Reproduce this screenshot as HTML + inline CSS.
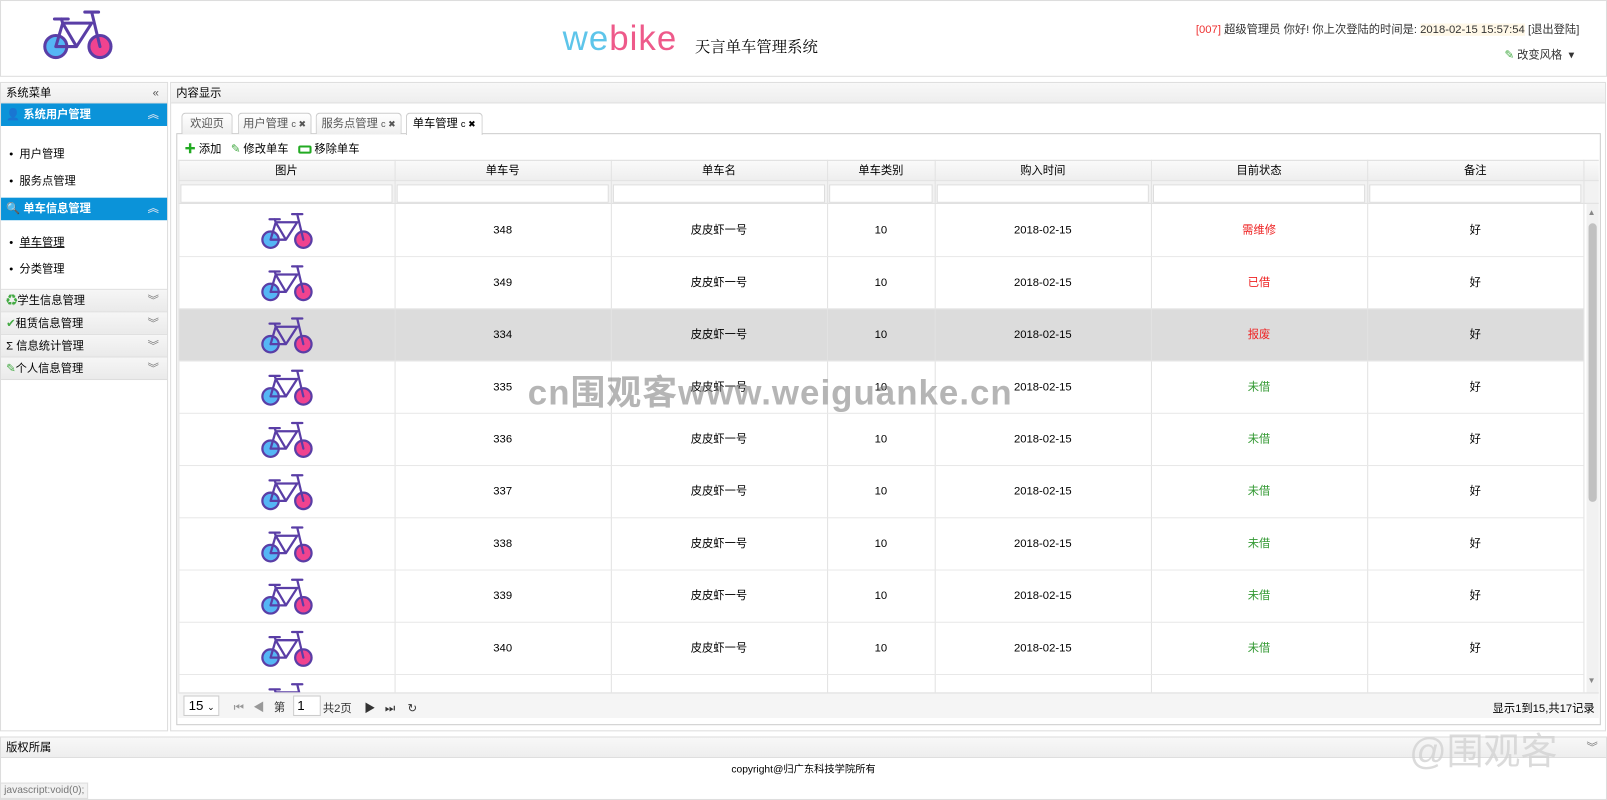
<!DOCTYPE html>
<html><head><meta charset="utf-8">
<style>
*{box-sizing:border-box;margin:0;padding:0}
html,body{width:1607px;height:800px;overflow:hidden;background:#fff}
body{font-family:"Liberation Sans","Noto Sans CJK SC",sans-serif;font-size:12px;color:#000;position:relative}
#wrap{position:absolute;left:0;top:0;width:1568px;height:781px;transform:scale(1.02487,1.0243);transform-origin:0 0}
.abs{position:absolute;white-space:nowrap}
.ph{background:linear-gradient(#f8f8f8,#eee);border-bottom:1px solid #ddd;height:20px;line-height:20px;padding-left:5px;font-size:11px;position:relative}
.cell{position:absolute;text-align:center;font-size:11px;line-height:14px}
.vl{position:absolute;width:1px;background:#e2e2e2}
.hl{position:absolute;height:1px;background:#e8e8e8}
.tab{position:absolute;top:110px;height:21px;border:1px solid #ccc;border-bottom:none;border-radius:4px 4px 0 0;background:linear-gradient(#fff,#eee);line-height:20px;text-align:center;font-size:11px;color:#555}
.acc{height:22px;line-height:22px;border-bottom:1px solid #ddd;background:linear-gradient(#f6f6f6,#eaeaea);font-size:11px;padding-left:5px;position:relative}
.acc .ch{position:absolute;right:8px;top:0;color:#777}
</style></head><body>
<svg width="0" height="0" style="position:absolute"><defs>
<g id="bike"><circle cx="9" cy="26" r="8" fill="#55b6f5" stroke="#5a3ea6" stroke-width="2.2"/><circle cx="41" cy="26" r="8" fill="#f0438f" stroke="#5a3ea6" stroke-width="2.2"/><path d="M9 26 L14 9 L35 9 M14 9 L24 26 L9 26 M24 26 L35 9 M41 26 L35 1 M30 1 L40 1 M8 6 L18 6 M13 6 L14 9" fill="none" stroke="#5a3ea6" stroke-width="2.2" stroke-linecap="round" stroke-linejoin="round"/></g>
</defs></svg>
<div id="wrap">
<div class="abs" style="left:0;top:0;width:1568px;height:75px;border:1px solid #ddd;background:#fff"></div>
<svg class="abs" style="left:41px;top:9px" width="70" height="50" viewBox="-1 -1 52 37"><use href="#bike"/></svg>
<div class="abs" style="left:549px;top:18px;font-size:34px;letter-spacing:1px;line-height:40px"><span style="color:#5ec5ea">we</span><span style="color:#ee5a8a">bike</span></div>
<div class="abs" style="left:678px;top:36px;font-size:15px;line-height:20px;font-family:'Noto Serif CJK SC',serif">天言单车管理系统</div>
<div class="abs" style="right:27px;top:20px;font-size:11px;color:#333"><span style="color:#e33">[007]</span> 超级管理员 你好! 你上次登陆的时间是: <span style="background:#fff8e8">2018-02-15 15:57:54</span> [退出登陆]</div>
<div class="abs" style="left:1468px;top:45px;font-size:11px;color:#333"><span style="color:#4a4">✎</span> 改变风格 &nbsp;▾</div>
<div class="abs" style="left:0;top:80px;width:164px;height:634px;border:1px solid #ddd">
 <div class="ph">系统菜单<span style="position:absolute;right:8px;color:#555">«</span></div>
 <div class="acc" style="background:#0b93d9;color:#fff;font-weight:bold;border:none">👤 系统用户管理<span class="ch" style="color:#cde">︽</span></div>
 <div style="height:70px;font-size:11px;padding:15px 0 0 8px;line-height:26px">• &nbsp;用户管理<br>• &nbsp;服务点管理</div>
 <div class="acc" style="background:#0b93d9;color:#fff;font-weight:bold;border:none">🔍 单车信息管理<span class="ch" style="color:#cde">︽</span></div>
 <div style="height:68px;font-size:11px;padding:9px 0 0 8px;line-height:26px;border-bottom:1px solid #ddd">• &nbsp;<u>单车管理</u><br>• &nbsp;分类管理</div>
 <div class="acc"><span style="color:#4a4">♻</span>学生信息管理<span class="ch">︾</span></div>
 <div class="acc"><span style="color:#4a4">✔</span>租赁信息管理<span class="ch">︾</span></div>
 <div class="acc">Σ 信息统计管理<span class="ch">︾</span></div>
 <div class="acc"><span style="color:#4a4">✎</span>个人信息管理<span class="ch">︾</span></div>
</div>
<div class="abs" style="left:166px;top:80px;width:1401px;height:634px;border:1px solid #ddd">
 <div class="ph">内容显示</div>
</div>
<div class="abs" style="left:172px;top:130px;width:1390px;height:578px;border:1px solid #ccc"></div>
<div class="tab" style="left:177px;width:50px">欢迎页</div>
<div class="tab" style="left:232px;width:72px">用户管理 <span style="font-size:9px">c ✖</span></div>
<div class="tab" style="left:308px;width:84px">服务点管理 <span style="font-size:9px">c ✖</span></div>
<div class="tab" style="left:396px;width:75px;background:#fff;color:#000;height:22px">单车管理 <span style="font-size:9px">c ✖</span></div>
<div class="abs" style="left:180px;top:137px;font-size:11px"><span style="color:#2a2;font-weight:bold">✚</span> 添加 &nbsp;&nbsp;<span style="color:#4a4">✎</span> 修改单车 &nbsp;&nbsp;<span style="display:inline-block;width:13px;height:8px;border:2px solid #2a2;border-radius:2px;vertical-align:middle"></span> 移除单车</div>
<div class="abs" style="left:174px;top:156px;width:1386px;height:21px;background:linear-gradient(#fafafa,#eee);border-top:1px solid #ddd;border-bottom:1px solid #ddd"></div>
<div class="abs" style="left:174px;top:177px;width:1386px;height:22px;background:#f2f2f2;border-bottom:1px solid #ddd"></div>
<div id="h"></div>
<div id="g" class="abs" style="left:0;top:199px;width:1560px;height:477px;overflow:hidden"></div>
<div class="abs" style="left:1548px;top:199px;width:12px;height:477px;background:#f1f1f1"></div>
<div class="abs" style="left:1550px;top:218px;width:8px;height:272px;background:#c1c1c1;border-radius:4px"></div>
<div class="abs" style="left:1549px;top:203px;font-size:8px;color:#888">▲</div>
<div class="abs" style="left:1549px;top:660px;font-size:8px;color:#888">▼</div>
<div class="abs" style="left:174px;top:676px;width:1386px;height:25px;background:#f5f5f5;border-top:1px solid #ddd"></div>
<div class="abs" style="left:179px;top:679px;width:35px;height:20px;border:1px solid #ccc;background:#fff;font-size:13px;line-height:18px;padding-left:4px">15 <span style="font-size:9px">⌄</span></div>
<div class="abs" style="left:228px;top:682px;font-size:11px;color:#999">⏮ &nbsp;&nbsp;◀ &nbsp;&nbsp;<span style="color:#333">第</span></div>
<div class="abs" style="left:286px;top:679px;width:27px;height:20px;border:1px solid #ccc;background:#fff;font-size:13px;line-height:18px;padding-left:3px">1</div>
<div class="abs" style="left:315px;top:683px;font-size:11px;color:#333">共2页 &nbsp;&nbsp;&nbsp;▶ &nbsp;&nbsp;⏭ &nbsp;&nbsp;&nbsp;↻</div>
<div class="abs" style="right:12px;top:683px;font-size:11px">显示1到15,共17记录</div>
<div class="abs" style="left:0;top:719px;width:1568px;height:62px;border:1px solid #ddd">
 <div class="ph">版权所属<span style="position:absolute;right:8px;color:#777">︾</span></div>
 <div style="text-align:center;font-size:10px;padding-top:2px">copyright@归广东科技学院所有</div>
</div>
<div class="abs" style="left:0;top:764px;width:86px;height:16px;background:#f2f2f2;border:1px solid #ddd;font-size:10px;color:#777;line-height:14px;padding-left:3px">javascript:void(0);</div>
<div class="abs" style="left:515px;top:356px;font-size:34px;font-weight:bold;color:rgba(120,120,120,.55);letter-spacing:1px">cn围观客www.weiguanke.cn</div>
<div class="abs" style="left:1375px;top:705px;font-size:36px;color:rgba(210,210,210,.8)">@围观客</div>
</div>
<script>
var cols=[174,385,596,807,912,1123,1334,1545];
var heads=["图片","单车号","单车名","单车类别","购入时间","目前状态","备注"];
var ids=[348,349,334,335,336,337,338,339,340,341];
var st=[["需维修","#e22"],["已借","#e22"],["报废","#e22"]];
var h="",g="";
for(var i=0;i<7;i++){var l=cols[i],w=cols[i+1]-l;
 h+='<div class="cell" style="left:'+l+'px;top:160px;width:'+w+'px">'+heads[i]+'</div>';
 h+='<div class="abs" style="left:'+(l+2)+'px;top:180px;width:'+(w-4)+'px;height:18px;background:#fff;border:1px solid #ddd"></div>';}
for(var i=0;i<8;i++)h+='<div class="vl" style="left:'+cols[i]+'px;top:156px;height:43px"></div>';
g+='<div class="abs" style="left:174px;top:102px;width:1371px;height:51px;background:#dcdcdc"></div>';
for(var i=0;i<8;i++)g+='<div class="vl" style="left:'+cols[i]+'px;top:0;height:477px"></div>';
for(var r=0;r<10;r++){var t=r*51,c=t+19;
 if(r<9){var s=r<3?st[r]:["未借","#393"];
 var v=[ids[r],"皮皮虾一号","10","2018-02-15",'<span style="color:'+s[1]+'">'+s[0]+'</span>',"好"];
 for(var i=0;i<6;i++)g+='<div class="cell" style="left:'+cols[i+1]+'px;top:'+c+'px;width:'+(cols[i+2]-cols[i+1])+'px">'+v[i]+'</div>';}
 g+='<svg class="abs" style="left:254px;top:'+(t+8)+'px" width="52" height="37" viewBox="-1 -1 52 37"><use href="#bike"/></svg>';
 g+='<div class="hl" style="left:174px;top:'+(t+51)+'px;width:1371px"></div>';}
document.getElementById('h').innerHTML=h;
document.getElementById('g').innerHTML=g;
</script>
</body></html>
